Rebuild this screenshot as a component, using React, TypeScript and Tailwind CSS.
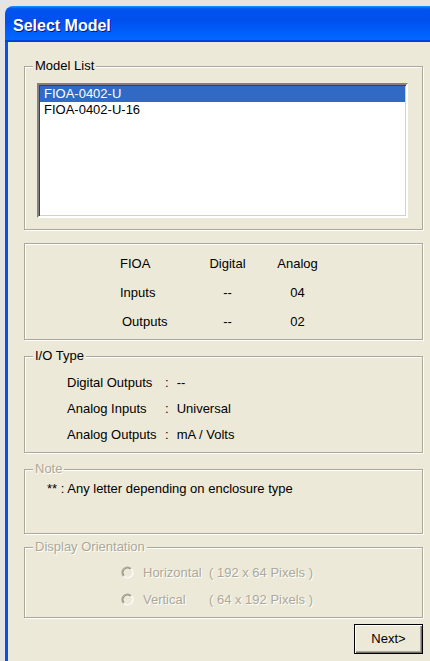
import type { ReactNode } from 'react';

type GroupBoxProps = {
  label?: string;
  disabled?: boolean;
  className: string;
  children?: ReactNode;
};

// classic etched frame with a caption sitting on the top edge
function GroupBox({ label, disabled, className, children }: GroupBoxProps) {
  return (
    <div
      className={`relative border border-[#aca899] shadow-[1px_1px_0_#fff,inset_1px_1px_0_#fff] ${className}`}
    >
      {label && (
        <span
          className={`absolute -top-[9px] left-[8px] bg-[#ece9d8] px-[2px] leading-[16px] ${
            disabled ? 'text-[#aca899] [text-shadow:1px_1px_0_#fff]' : 'text-black'
          }`}
        >
          {label}
        </span>
      )}
      {children}
    </div>
  );
}

function RadioOff() {
  return (
    <svg width="13" height="13" viewBox="0 0 13 13" className="shrink-0">
      <path d="M2.61 10.39A5.5 5.5 0 0 1 10.39 2.61" fill="none" stroke="#a7a496" strokeWidth="1.2" />
      <path d="M10.39 2.61A5.5 5.5 0 0 1 2.61 10.39" fill="none" stroke="#ffffff" strokeWidth="1.2" />
      <path d="M3.32 9.68A4.5 4.5 0 0 1 9.68 3.32" fill="none" stroke="#8a877a" strokeWidth="1" />
      <path d="M9.68 3.32A4.5 4.5 0 0 1 3.32 9.68" fill="none" stroke="#f1efe2" strokeWidth="1" />
    </svg>
  );
}

const models = ['FIOA-0402-U', 'FIOA-0402-U-16'];

const ioTypes = [
  { name: 'Digital Outputs', value: '--' },
  { name: 'Analog Inputs', value: 'Universal' },
  { name: 'Analog Outputs', value: 'mA / Volts' },
];

export default function App() {
  return (
    <div className="h-[661px] w-[430px] overflow-hidden bg-[#e4e4e4] pt-[6px] pl-[5px] font-['Liberation_Sans',Arial,sans-serif] text-[13px] text-black">
      <div className="flex h-full flex-col">
        {/* Title bar */}
        <div className="flex h-[36px] shrink-0 items-center rounded-tl-[8px] bg-[linear-gradient(180deg,#0997ff,#0053ee_8%,#0050ee_40%,#06f_88%,#06f_93%,#005bff_95%,#003dd7_96%,#003dd7)] pl-[8px] pt-[3px]">
          <span className="text-[16px] font-bold text-white [text-shadow:1px_1px_0_#0f1089]">
            Select Model
          </span>
        </div>

        {/* Dialog body */}
        <div className="flex-1 border-l-[3px] border-[#0b4fe3] bg-[#ece9d8] pt-[24px] pl-[16px] pr-[7px]">
          <GroupBox label="Model List" className="h-[164px]">
            <div className="mt-[16px] ml-[12px] h-[135px] w-[371px] border-2 border-t-[#808080] border-l-[#808080] border-b-white border-r-white bg-white shadow-[inset_1px_1px_0_#404040,inset_-1px_-1px_0_#d4d0c8]">
              <div className="pt-px pl-px pr-px">
                {models.map((m, i) => (
                  <div
                    key={m}
                    className={`h-[16px] pl-[4px] leading-[16px] ${
                      i === 0 ? 'bg-[#316ac5] text-white' : 'text-black'
                    }`}
                  >
                    {m}
                  </div>
                ))}
              </div>
            </div>
          </GroupBox>

          <GroupBox className="mt-[13px] h-[97px]">
            <div className="grid grid-cols-[77px_61px_79px] pt-[5px] pl-[95px]">
              <div className="flex h-[29px] items-center">FIOA</div>
              <div className="flex h-[29px] items-center justify-center">Digital</div>
              <div className="flex h-[29px] items-center justify-center">Analog</div>

              <div className="flex h-[29px] items-center">Inputs</div>
              <div className="flex h-[29px] items-center justify-center">--</div>
              <div className="flex h-[29px] items-center justify-center">04</div>

              <div className="flex h-[29px] items-center pl-[2px]">Outputs</div>
              <div className="flex h-[29px] items-center justify-center">--</div>
              <div className="flex h-[29px] items-center justify-center">02</div>
            </div>
          </GroupBox>

          <GroupBox label="I/O Type" className="mt-[16px] h-[97px]">
            <div className="pt-[13px] pl-[42px]">
              {ioTypes.map((t) => (
                <div key={t.name} className="flex h-[26px] items-center">
                  <span className="w-[98px]">{t.name}</span>
                  <span>:</span>
                  <span className="ml-[8px]">{t.value}</span>
                </div>
              ))}
            </div>
          </GroupBox>

          <GroupBox label="Note" disabled className="mt-[16px] h-[65px]">
            <div className="pt-[11px] pl-[22px] leading-[16px]">
              ** : Any letter depending on enclosure type
            </div>
          </GroupBox>

          <GroupBox label="Display Orientation" disabled className="mt-[13px] h-[71px]">
            <div className="pt-[11px] pl-[96px] text-[#aca899] [text-shadow:1px_1px_0_#fff]">
              <div className="flex h-[27px] items-center">
                <RadioOff />
                <span className="ml-[9px] w-[66px]">Horizontal</span>
                <span>( 192 x 64 Pixels )</span>
              </div>
              <div className="flex h-[27px] items-center">
                <RadioOff />
                <span className="ml-[9px] w-[66px]">Vertical</span>
                <span>( 64 x 192 Pixels )</span>
              </div>
            </div>
          </GroupBox>

          <div className="mt-[6px] flex justify-end">
            <button className="flex h-[30px] w-[69px] items-center justify-center border border-black bg-[#ece9d8] shadow-[inset_1px_1px_0_#fff,inset_-1px_-1px_0_#716f64,inset_-2px_-2px_0_#aca899]">
              Next&gt;
            </button>
          </div>
        </div>
      </div>
    </div>
  );
}
